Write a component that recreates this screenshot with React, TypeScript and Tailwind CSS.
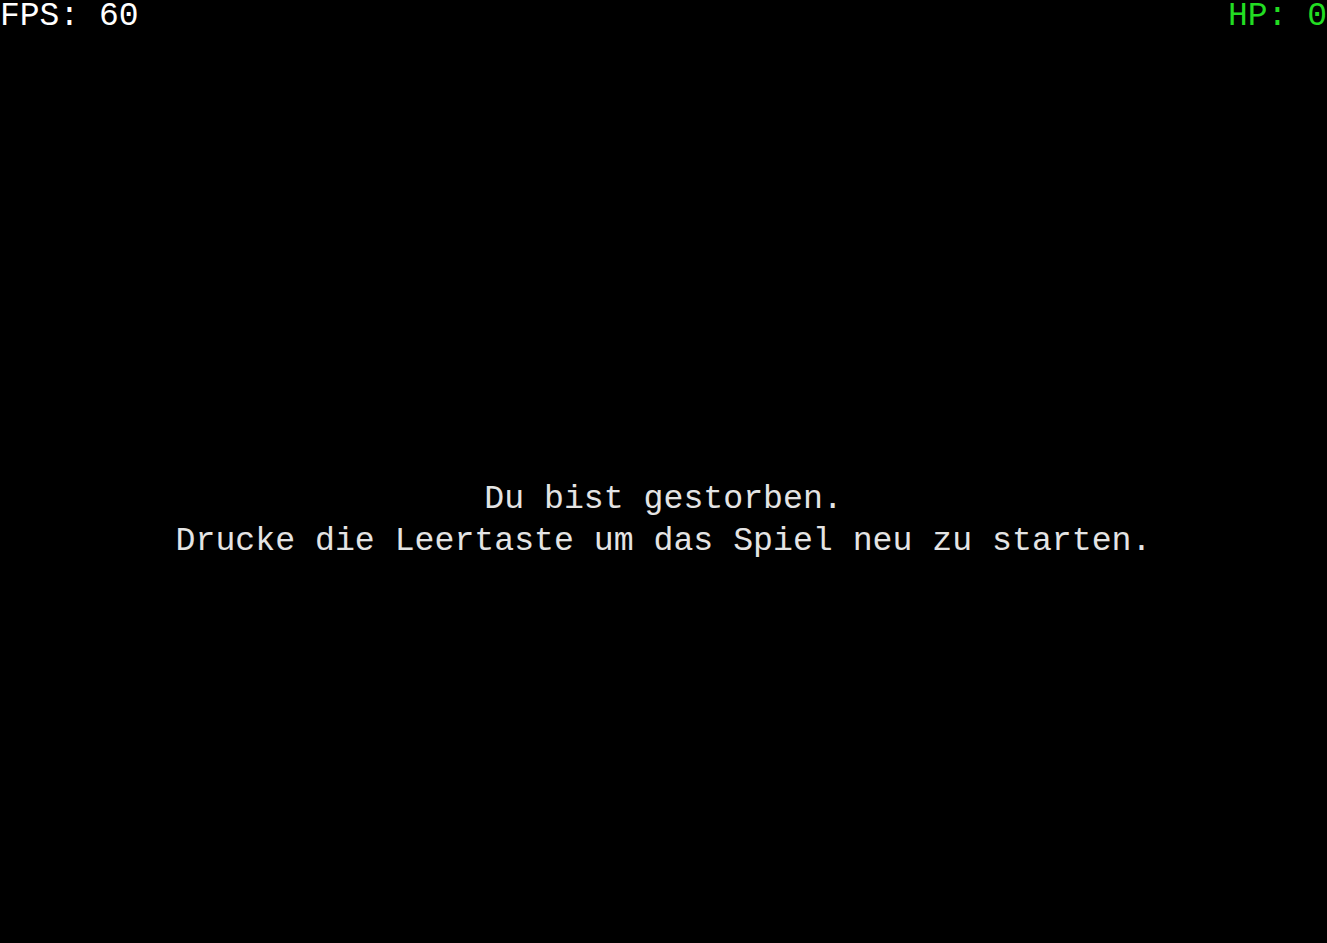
export default function App() {
    return (
        <div className="flex h-[943px] w-full flex-col overflow-hidden bg-black font-['Liberation_Mono','Courier_New',monospace]">
            <div className="flex justify-between text-[33px] leading-none">
                <span className="text-white">FPS: 60</span>
                <span className="text-[#22dd22]">HP: 0</span>
            </div>
            <div className="mt-[445px] flex flex-col items-center text-[33.2px] leading-[42px] text-[#e4e4e4]">
                <p>Du bist gestorben.</p>
                <p>Drucke die Leertaste um das Spiel neu zu starten.</p>
            </div>
        </div>
    );
}
